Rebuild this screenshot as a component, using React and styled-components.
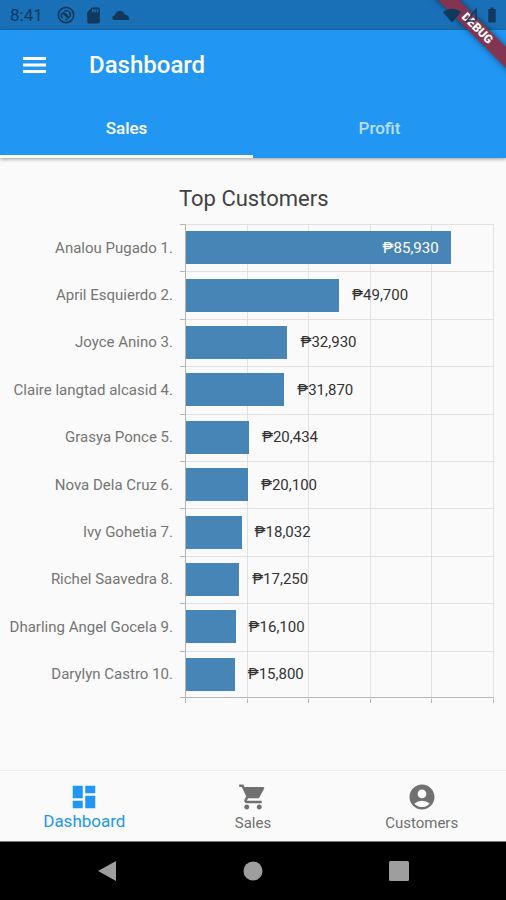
import React from 'react';
import styled, { createGlobalStyle } from 'styled-components';
import {
  MdAccountCircle,
  MdBatteryFull,
  MdDashboard,
  MdSdCard,
  MdShoppingCart
} from 'react-icons/md';

const AXIS_MAX = 100000;
const AXIS_STEPS = 5;

const customers = [
  { name: 'Analou Pugado', total: 85930 },
  { name: 'April Esquierdo', total: 49700 },
  { name: 'Joyce Anino', total: 32930 },
  { name: 'Claire langtad alcasid', total: 31870 },
  { name: 'Grasya Ponce', total: 20434 },
  { name: 'Nova Dela Cruz', total: 20100 },
  { name: 'Ivy Gohetia', total: 18032 },
  { name: 'Richel Saavedra', total: 17250 },
  { name: 'Dharling Angel Gocela', total: 16100 },
  { name: 'Darylyn Castro', total: 15800 }
];

const GlobalStyle = createGlobalStyle`
  * {
    box-sizing: border-box;
  }
  body {
    margin: 0;
    background-color: #fafafa;
    font-family: Roboto, 'Noto Sans', sans-serif;
  }
  button {
    padding: 0;
    border: 0;
    background: none;
    font-family: inherit;
    cursor: pointer;
  }
  svg {
    display: block;
  }
`;

const Screen = styled.div`
  position: relative;
  display: flex;
  flex-direction: column;
  min-height: 100vh;
  overflow: hidden;
`;

const StatusBar = styled.div`
  display: flex;
  align-items: center;
  height: 30px;
  padding: 0 5px 0 10px;
  background-color: #1a70b7;
  color: #10395d;
`;

const Clock = styled.span`
  margin-right: 14px;
  font-size: 17px;
`;

/* the system icons stay above the debug banner */
const StatusIcons = styled.div`
  position: relative;
  z-index: 2;
  display: flex;
  align-items: center;
  gap: ${props => props.$gap}px;
  margin-left: ${props => (props.$end ? 'auto' : '0')};
`;

const Header = styled.header`
  position: relative;
  background-color: #2196f3;
  color: white;
  box-shadow: 0 1px 4px rgba(0, 0, 0, 0.4);
`;

const Toolbar = styled.div`
  display: flex;
  align-items: center;
  height: 70px;
  padding-left: 20px;
`;

const MenuButton = styled.button`
  margin-right: 39px;
  color: white;
`;

const Title = styled.h1`
  margin: 0;
  font-size: 24px;
  font-weight: 500;
`;

const Tabs = styled.div`
  display: flex;
`;

const Tab = styled.button`
  flex: 1;
  height: 58px;
  border-bottom: 3px solid ${props => (props.$active ? '#fafafa' : 'transparent')};
  color: ${props => (props.$active ? 'white' : 'rgba(255, 255, 255, 0.7)')};
  font-size: 17px;
  font-weight: 500;
`;

const Content = styled.main`
  flex: 1;
  padding: 26px 12px 0 0;
`;

const ChartTitle = styled.h2`
  margin: 0 0 10px 179px;
  color: #424242;
  font-size: 22px;
  font-weight: 400;
  line-height: 30px;
`;

const Chart = styled.div`
  display: grid;
  grid-template-columns: 185px 1fr;
  height: 474px;
`;

const Layer = styled.div`
  display: grid;
  grid-row: 1;
  grid-column: ${props => (props.$plot ? '2' : '1 / 3')};
`;

const GridColumns = styled(Layer)`
  grid-template-columns: repeat(${AXIS_STEPS}, 1fr);
  height: calc(100% + 5px);
  border-left: 1px solid #b5b5b5;
`;

const GridColumn = styled.div`
  border-right: 1px solid #e2e2e2;
  border-image: linear-gradient(#e2e2e2 474px, #b5b5b5 474px) 1;
`;

const Rows = styled(Layer)`
  grid-auto-rows: 1fr;
`;

const Row = styled.div`
  display: grid;
  grid-template-columns: 173px 7px 6px 1fr;
  align-items: center;
`;

const Name = styled.span`
  color: #757575;
  font-size: 15px;
  text-align: right;
  white-space: nowrap;
`;

const Tick = styled.span`
  grid-column: 3;
  align-self: stretch;
  border-top: 1px solid #b5b5b5;
  border-bottom: ${props => (props.$last ? '1px solid #b5b5b5' : '0')};
`;

const Track = styled.div`
  display: flex;
  align-items: center;
  height: 100%;
  padding-bottom: ${props => (props.$last ? '0' : '1px')};
  border-top: 1px solid #e2e2e2;
  border-bottom: ${props => (props.$last ? '1px solid #b5b5b5' : '0')};
`;

const Bar = styled.div`
  display: flex;
  align-items: center;
  justify-content: flex-end;
  height: 33px;
  background-color: #4885b7;
`;

const Amount = styled.span`
  margin: 0 12px 0 13px;
  color: ${props => (props.$inside ? 'white' : '#333')};
  font-size: 15px;
`;

const BottomNav = styled.nav`
  display: flex;
  height: 71px;
  border-top: 1px solid #ececec;
`;

const NavItem = styled.button`
  display: flex;
  flex: 1;
  flex-direction: column;
  align-items: center;
  padding-top: 11px;
  color: ${props => (props.$active ? '#2196f3' : '#707070')};
  font-size: ${props => (props.$active ? '17px' : '15px')};
  line-height: ${props => (props.$active ? '18px' : '22px')};
`;

const SystemNav = styled.div`
  display: flex;
  align-items: center;
  justify-content: space-around;
  height: 59px;
  padding: 0 34px;
  border-top: 1px solid #777;
  background-color: black;
`;

const DebugBanner = styled.div`
  position: absolute;
  top: 21px;
  right: -41px;
  z-index: 1;
  width: 140px;
  height: 15px;
  transform: rotate(45deg);
  background-color: #833450;
  box-shadow: 0 0 6px rgba(0, 0, 0, 0.5);
  color: white;
  font-size: 12px;
  font-weight: 900;
  line-height: 15px;
  text-align: center;
`;

const MenuIcon = () => (
  <svg width="30" height="30" viewBox="0 0 30 30" fill="currentColor">
    <path d="M3 7h23v3H3zM3 13.5h23v3H3zM3 20h23v3H3z" />
  </svg>
);

const NoSyncIcon = () => (
  <svg width="18" height="18" viewBox="0 0 18 18" fill="none" stroke="currentColor">
    <circle cx="9" cy="9" r="7.7" strokeWidth="1.7" />
    <path d="M5.7 12.2A4.5 4.5 0 0 1 5 7M7.5 4.8A4.5 4.5 0 0 1 13 11M10.5 13.2A4.5 4.5 0 0 1 8 13.4" strokeWidth="1.5" />
    <path d="M6 6.2l6.2 6" strokeWidth="2.6" />
  </svg>
);

const CloudIcon = () => (
  <svg width="18" height="18" viewBox="0 0 18 18" fill="currentColor">
    <path d="M2.8 14C1 14 .3 12.900.3 11.800.3 10.500 1.400 9.600 2.700 9.600 3.500 6.500 5.500 4.700 8 4.700c2.300 0 4 1.400 4.700 3.800 2.700.2 4.500 2 4.800 5.500z" />
  </svg>
);

const WifiIcon = () => (
  <svg width="18" height="15" viewBox="0 0 18 15" fill="currentColor">
    <path d="M9 14.500L0 4.200C5-.5 13-.5 18 4.200z" />
  </svg>
);

const SignalIcon = () => (
  <svg width="14" height="16" viewBox="0 0 14 16" fill="none" stroke="currentColor">
    <path d="M11 2.500v11.500H2z" strokeWidth="1.6" />
  </svg>
);

const Customer = ({ rank, name, total, last }) => {
  const inside = total / AXIS_MAX > 0.8;
  const amount = <Amount $inside={inside}>₱{total.toLocaleString('en-US')}</Amount>;

  return (
    <Row>
      <Name>{name} {rank}.</Name>
      <Tick $last={last} />
      <Track $last={last}>
        <Bar style={{ width: `${(total / AXIS_MAX) * 100}%` }}>{inside && amount}</Bar>
        {!inside && amount}
      </Track>
    </Row>
  );
};

const App = () => (
  <Screen>
    <GlobalStyle />
    <StatusBar>
      <Clock>8:41</Clock>
      <StatusIcons $gap={9}>
        <NoSyncIcon />
        <MdSdCard size={19} />
        <CloudIcon />
      </StatusIcons>
      <StatusIcons $gap={4} $end>
        <WifiIcon />
        <SignalIcon />
        <MdBatteryFull size={18} />
      </StatusIcons>
    </StatusBar>
    <Header>
      <Toolbar>
        <MenuButton aria-label="Open menu">
          <MenuIcon />
        </MenuButton>
        <Title>Dashboard</Title>
      </Toolbar>
      <Tabs>
        <Tab $active>Sales</Tab>
        <Tab>Profit</Tab>
      </Tabs>
    </Header>
    <Content>
      <ChartTitle>Top Customers</ChartTitle>
      <Chart>
        <GridColumns $plot>
          {Array.from({ length: AXIS_STEPS }, (_, i) => (
            <GridColumn key={i} />
          ))}
        </GridColumns>
        <Rows>
          {customers.map((customer, i) => (
            <Customer
              key={customer.name}
              rank={i + 1}
              last={i === customers.length - 1}
              {...customer}
            />
          ))}
        </Rows>
      </Chart>
    </Content>
    <BottomNav>
      <NavItem $active>
        <MdDashboard size={30} />
        Dashboard
      </NavItem>
      <NavItem>
        <MdShoppingCart size={30} />
        Sales
      </NavItem>
      <NavItem>
        <MdAccountCircle size={30} />
        Customers
      </NavItem>
    </BottomNav>
    <SystemNav>
      <button aria-label="Back">
        <svg width="20" height="22" viewBox="0 0 20 22" fill="#9e9e9e">
          <path d="M19 1v20L1 11z" />
        </svg>
      </button>
      <button aria-label="Home">
        <svg width="20" height="20" viewBox="0 0 20 20" fill="#9e9e9e">
          <circle cx="10" cy="10" r="9.5" />
        </svg>
      </button>
      <button aria-label="Recent apps">
        <svg width="20" height="20" viewBox="0 0 20 20" fill="#9e9e9e">
          <rect width="20" height="20" rx="1.5" />
        </svg>
      </button>
    </SystemNav>
    <DebugBanner>DEBUG</DebugBanner>
  </Screen>
);

export default App;
